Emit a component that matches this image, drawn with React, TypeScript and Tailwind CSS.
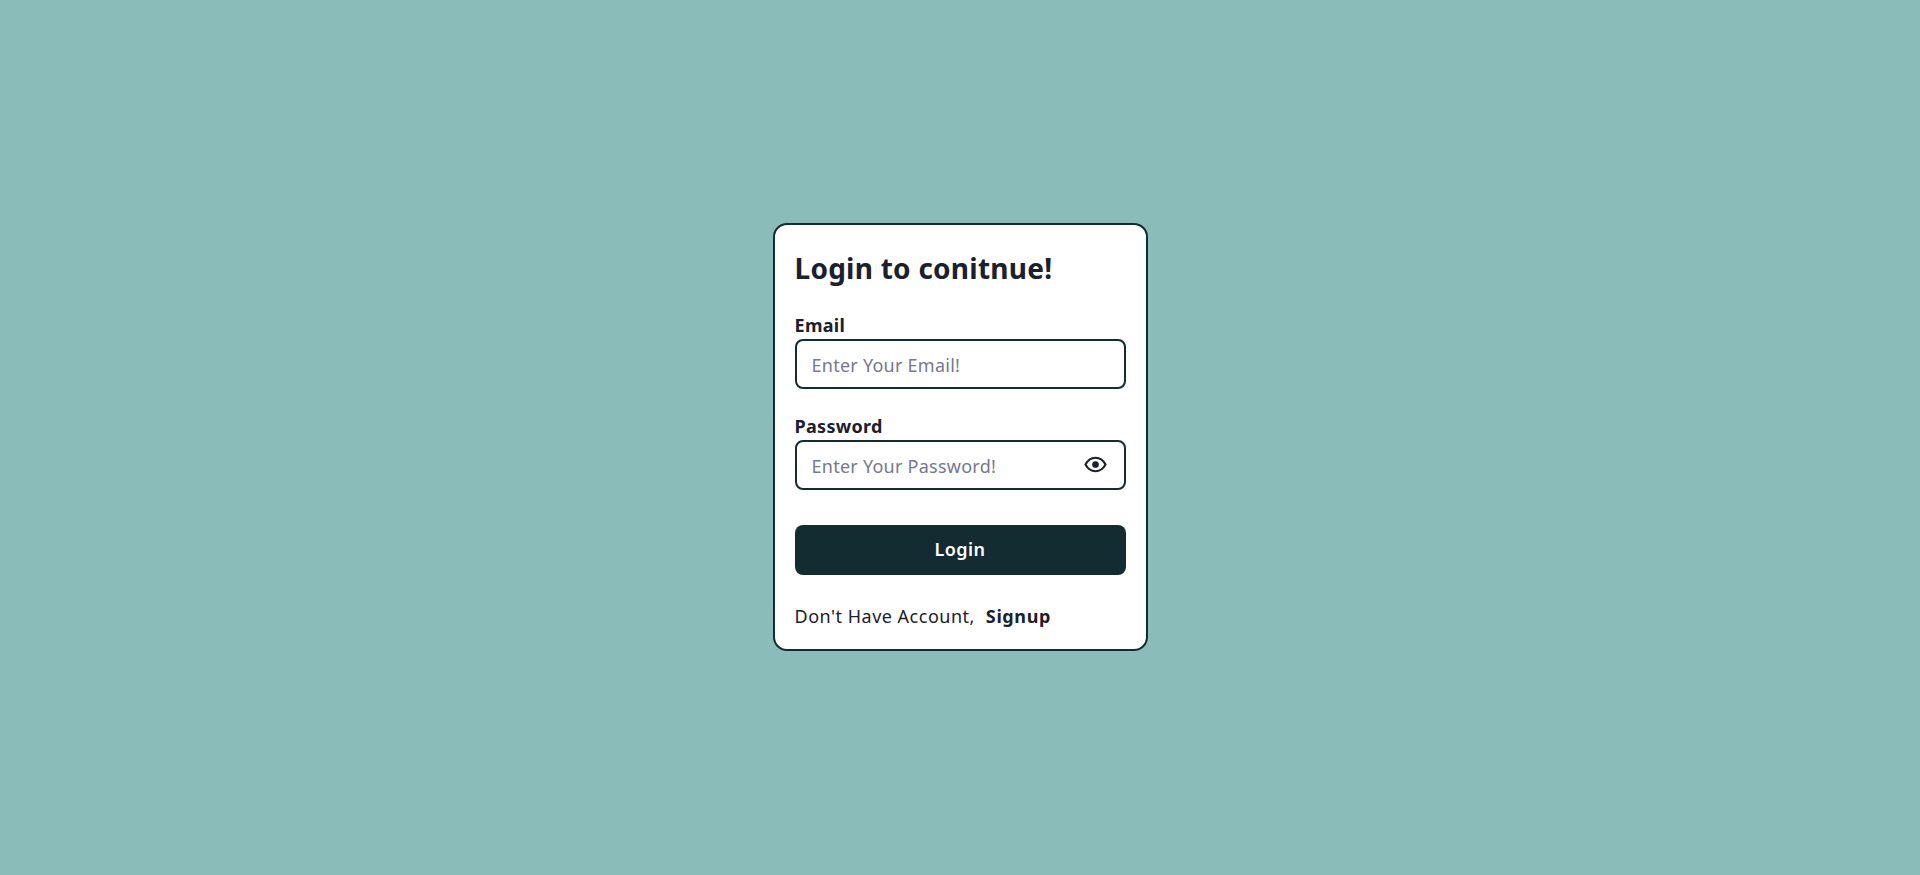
import React from 'react';

const font = "font-['Noto_Sans',sans-serif]";

const Field: React.FC<{ label: string; placeholder: string; children?: React.ReactNode }> = ({ label, placeholder, children }) => (
  <div className="flex flex-col mb-[25px]">
    <label className="text-[18px] leading-[24px] font-bold text-[#1a202c] tracking-[0.3px] h-[26px]">{label}</label>
    <div className="flex items-center h-[50px] border-2 border-[#122c31] rounded-lg pl-[15px] pr-[17px]">
      <input
        placeholder={placeholder}
        className="flex-1 min-w-0 outline-none pt-[3px] text-[18px] tracking-[0.25px] placeholder:text-[#76788f]"
      />
      {children}
    </div>
  </div>
);

export default function App() {
  return (
    <div className={`min-h-[875px] flex items-center justify-center bg-[#8abcba] ${font}`}>
      <div className="w-[375px] h-[428px] mb-[2px] bg-white border-2 border-[#122c31] rounded-[14px] pt-[24px] px-[20px]">
        <h1 className="text-[28px] leading-[38px] font-bold text-[#1a202c] tracking-[0.25px] mb-[26px]">Login to conitnue!</h1>
        <Field label="Email" placeholder="Enter Your Email!" />
        <Field label="Password" placeholder="Enter Your Password!">
          <svg width="23" height="23" viewBox="0 0 24 24" fill="none" stroke="#1a202c" strokeWidth="2.2" strokeLinejoin="round">
            <path d="M1.500 12C4 7.500 7.700 5 12 5s8 2.500 10.500 7c-2.500 4.500-6.200 7-10.500 7S4 16.500 1.500 12z" />
            <circle cx="12" cy="12" r="3.500" fill="#1a202c" stroke="none" />
          </svg>
        </Field>
        <button className="w-full h-[50px] mt-[10px] bg-[#122c31] text-white rounded-lg text-[18px] font-semibold tracking-[0.4px]">Login</button>
        <p className="mt-[28px] text-[18px] leading-[26px] text-[#1a202c] tracking-[0.5px]">
          Don't Have Account,<span className="font-bold ml-[11px] tracking-[0.6px]">Signup</span>
        </p>
      </div>
    </div>
  );
}
